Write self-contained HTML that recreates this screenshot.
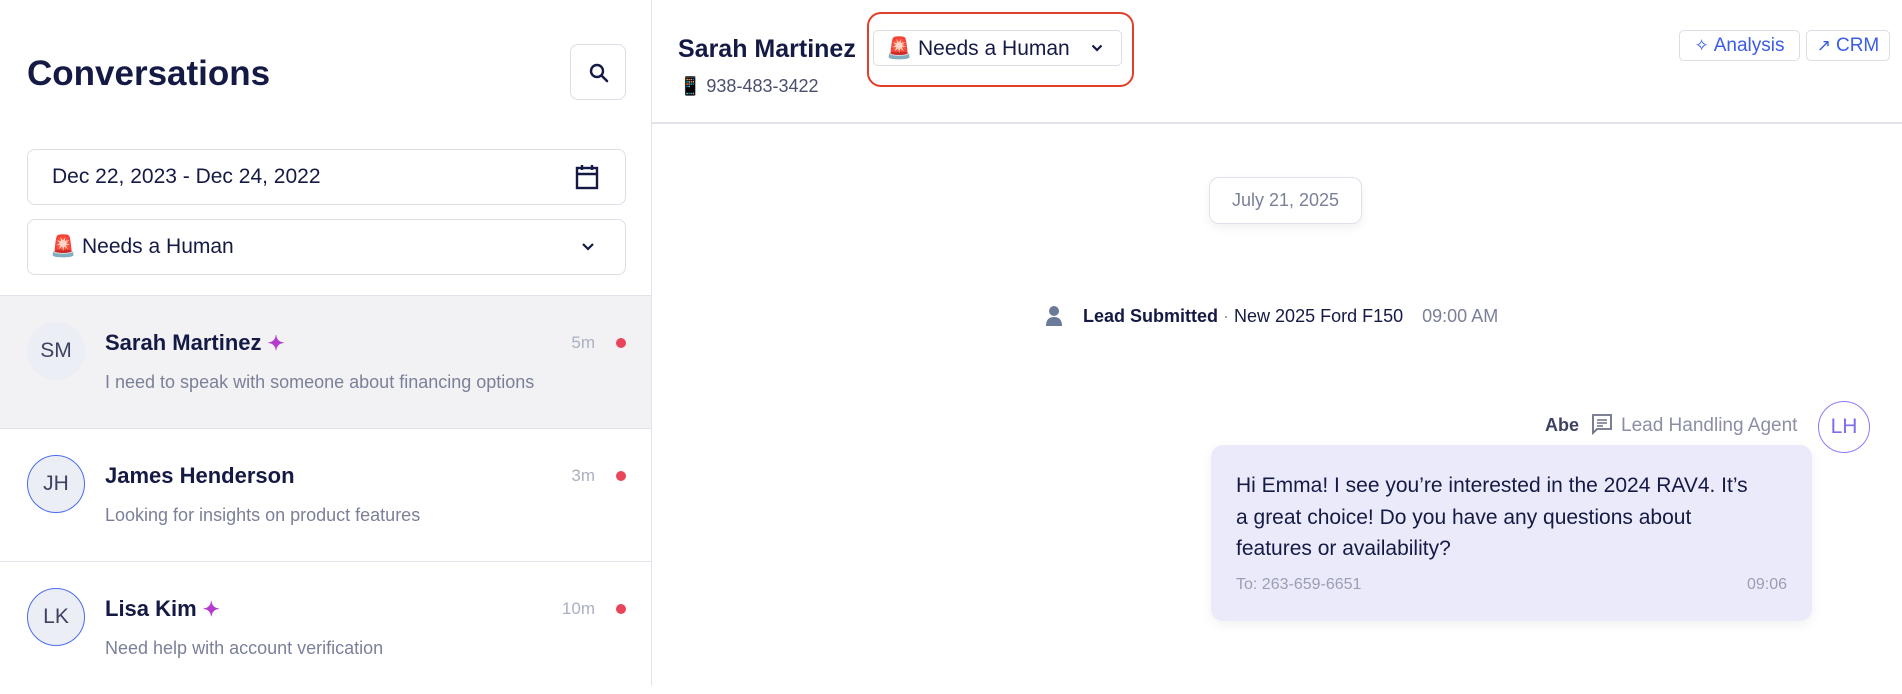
<!DOCTYPE html>
<html><head><meta charset="utf-8"><style>
*{box-sizing:border-box;margin:0;padding:0}
body{width:1902px;height:686px;overflow:hidden;background:#fff;font-family:"Liberation Sans",sans-serif;color:#1b1f4b;position:relative}
.a{position:absolute;white-space:nowrap}
.side{position:absolute;left:0;top:0;width:652px;height:686px;border-right:1px solid #e1e2ea}
.box{position:absolute;border:1.5px solid #dcdee6;border-radius:8px;background:#fff}
.row{position:absolute;left:0;width:651px;height:133px;border-top:1.5px solid #e1e2ea}
.av{position:absolute;left:27px;top:26px;width:58px;height:58px;border-radius:50%;background:#eceef5;display:flex;align-items:center;justify-content:center;font-size:21px;color:#3d4263}
.av.b{border:1.5px solid #4a6cf0}
.nm{position:absolute;left:105px;top:34px;font-size:22px;font-weight:700;color:#151a45}
.pv{position:absolute;left:105px;top:76px;font-size:18px;color:#7b8099}
.tm{position:absolute;right:56px;top:37px;font-size:17px;color:#aab0c2}
.dot{position:absolute;left:616px;top:42px;width:10px;height:10px;border-radius:50%;background:#e8445a}
.sp{color:#b43ccd;font-size:20px}
.btn{position:absolute;border:1.5px solid #dcdee6;border-radius:5px;color:#3b5ce8;font-size:19px;display:flex;align-items:center;justify-content:center;gap:5px}
</style></head><body>
<div class="side">
 <div class="a" style="left:27px;top:54px;font-size:35px;font-weight:700;color:#151a45">Conversations</div>
 <div class="box" style="left:570px;top:44px;width:56px;height:56px">
  <svg style="position:absolute;left:17px;top:17px" width="22" height="22" viewBox="0 0 22 22"><circle cx="9" cy="9" r="6" fill="none" stroke="#151a45" stroke-width="2.4"/><path d="M13.5 13.5L19 19" stroke="#151a45" stroke-width="2.6" stroke-linecap="round"/></svg>
 </div>
 <div class="box" style="left:27px;top:149px;width:599px;height:56px">
  <div class="a" style="left:24px;top:15px;font-size:21px;color:#151a45">Dec 22, 2023 - Dec 24, 2022</div>
  <svg style="position:absolute;right:26px;top:14px" width="24" height="26" viewBox="0 0 24 26"><rect x="2" y="4" width="20" height="20" fill="none" stroke="#151a45" stroke-width="2.4"/><path d="M2 10H22M7 1V6M17 1V6" stroke="#151a45" stroke-width="2.4"/></svg>
 </div>
 <div class="box" style="left:27px;top:219px;width:599px;height:56px">
  <div class="a" style="left:22px;top:15px;font-size:21px;color:#151a45">🚨 Needs a Human</div>
  <svg style="position:absolute;right:30px;top:22px" width="14" height="10" viewBox="0 0 14 10"><path d="M2 2L7 7L12 2" fill="none" stroke="#151a45" stroke-width="2.2"/></svg>
 </div>
 <div class="row" style="top:295px;background:#f2f2f5">
  <div class="av">SM</div><div class="nm">Sarah Martinez <span class="sp">✦</span></div>
  <div class="pv">I need to speak with someone about financing options</div><div class="tm">5m</div><div class="dot"></div>
 </div>
 <div class="row" style="top:428px">
  <div class="av b">JH</div><div class="nm">James Henderson</div>
  <div class="pv">Looking for insights on product features</div><div class="tm">3m</div><div class="dot"></div>
 </div>
 <div class="row" style="top:561px">
  <div class="av b">LK</div><div class="nm">Lisa Kim <span class="sp">✦</span></div>
  <div class="pv">Need help with account verification</div><div class="tm">10m</div><div class="dot"></div>
 </div>
</div>

<div class="a" style="left:678px;top:35px;font-size:25px;font-weight:700;color:#151a45">Sarah Martinez</div>
<div class="a" style="left:679px;top:76px;font-size:18px;color:#4a4f6e">📱 938-483-3422</div>
<div class="a" style="left:867px;top:12px;width:267px;height:75px;border:2.5px solid #e0402a;border-radius:14px"></div>
<div class="box" style="left:873px;top:30px;width:249px;height:36px;border-radius:5px">
 <div class="a" style="left:12px;top:6px;font-size:21px;color:#151a45">🚨 Needs a Human</div>
 <svg style="position:absolute;right:18px;top:13px" width="12" height="9" viewBox="0 0 12 9"><path d="M1.5 1.5L6 6L10.5 1.5" fill="none" stroke="#151a45" stroke-width="2.2"/></svg>
</div>
<div class="btn" style="left:1679px;top:30px;width:121px;height:31px"><span style="font-size:17px">✧</span>Analysis</div>
<div class="btn" style="left:1806px;top:30px;width:84px;height:31px"><span style="font-size:17px">↗</span>CRM</div>
<div class="a" style="left:652px;top:122px;width:1250px;height:1.5px;background:#e1e2ea"></div>

<div class="a" style="left:1209px;top:177px;width:153px;height:47px;border:1.5px solid #e0e1ea;border-radius:10px;box-shadow:0 4px 10px rgba(0,0,0,.06);font-size:18px;color:#7b8099;display:flex;align-items:center;justify-content:center">July 21, 2025</div>

<svg class="a" style="left:1044px;top:305px" width="20" height="22" viewBox="0 0 20 22"><circle cx="10" cy="6" r="5" fill="#6b7a99"/><path d="M2 21Q2 12 10 12Q18 12 18 21Z" fill="#6b7a99"/></svg>
<div class="a" style="left:1083px;top:306px;font-size:18px;color:#151a45"><b>Lead Submitted</b> <span style="color:#999">·</span> New 2025 Ford F150 <span style="color:#7b8099;margin-left:14px">09:00 AM</span></div>

<div class="a" style="left:1545px;top:415px;font-size:18px;font-weight:700;color:#3d4263">Abe</div>
<svg class="a" style="left:1591px;top:413px" width="22" height="22" viewBox="0 0 22 22"><path d="M2 2H20V16H6L2 20Z" fill="none" stroke="#6b7088" stroke-width="1.8"/><path d="M6 7H16M6 10H16M6 13H12" stroke="#6b7088" stroke-width="1.6"/></svg>
<div class="a" style="left:1621px;top:415px;font-size:19px;color:#8a8fa6">Lead Handling Agent</div>
<div class="a" style="left:1818px;top:401px;width:52px;height:52px;border-radius:50%;border:1.5px solid #8b7cf6;color:#7c6df0;font-size:21px;display:flex;align-items:center;justify-content:center">LH</div>

<div class="a" style="left:1211px;top:445px;width:601px;height:176px;background:#ebeafb;border-radius:12px;box-shadow:0 4px 12px rgba(0,0,0,.06)">
 <div class="a" style="left:25px;top:25px;font-size:21px;line-height:31.5px;color:#151a45">Hi Emma! I see you’re interested in the 2024 RAV4. It’s<br>a great choice! Do you have any questions about<br>features or availability?</div>
 <div class="a" style="left:25px;top:131px;font-size:16px;color:#9a9eb2">To: 263-659-6651</div>
 <div class="a" style="right:25px;top:131px;font-size:16px;color:#9a9eb2">09:06</div>
</div>
</body></html>
